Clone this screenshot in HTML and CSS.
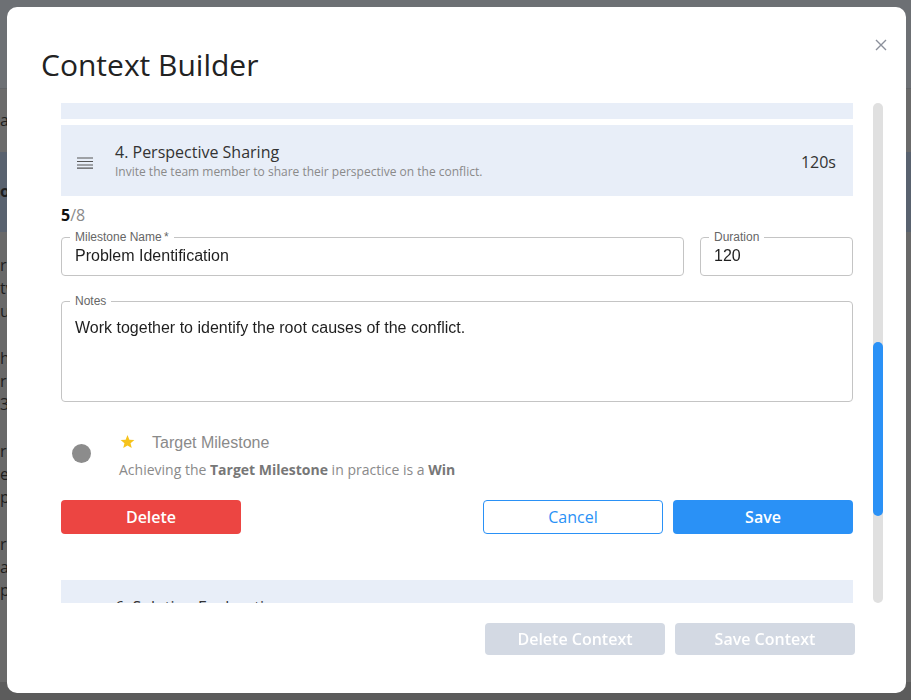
FILE: index.html
```html
<!DOCTYPE html>
<html>
<head>
  <title>Context Builder</title>
  <link rel="stylesheet" href="styles.css">
</head>
<body>
  <!-- page behind the dialog, only a sliver of it shows -->
  <div class="page">
    <div class="page-band page-head"></div>
    <div class="page-band page-plain"><p class="page-line l1">as the first step</p></div>
    <div class="page-band page-blue"><p class="page-line bold l2">or Conflict</p></div>
    <div class="page-band page-plain tall">
      <p class="page-line">r. the team</p>
      <p class="page-line">tw the lead</p>
      <p class="page-line">us the work</p>
      <p class="page-line gap">he next item</p>
      <p class="page-line">r the plan</p>
      <p class="page-line">3 minutes</p>
      <p class="page-line gap">rs and more</p>
      <p class="page-line">e of them</p>
      <p class="page-line">p the rest</p>
      <p class="page-line gap">r. the team</p>
      <p class="page-line">at the end</p>
      <p class="page-line">p the rest</p>
    </div>
  </div>

  <div class="overlay">
    <div class="modal">
      <button class="close-btn">
        <svg width="12" height="12" viewBox="0 0 12 12"><path d="M1 1L11 11M11 1L1 11" stroke="#8b909b" stroke-width="1.4" fill="none"/></svg>
      </button>
      <h2 class="modal-title">Context Builder</h2>

      <div class="modal-body">
        <div class="milestones">
          <div class="ms-card ms-tail"></div>

          <div class="ms-card">
            <svg class="drag" width="16" height="12" viewBox="0 0 16 12">
              <path d="M0 1H16M0 4.5H16M0 8H16M0 11.2H16" stroke="#555" stroke-width="1.2" fill="none"/>
            </svg>
            <div class="ms-info">
              <div class="ms-title">4. Perspective Sharing</div>
              <div class="ms-desc">Invite the team member to share their perspective on the conflict.</div>
            </div>
            <div class="ms-time">120s</div>
          </div>

          <div class="ms-count"><b>5</b><span>/8</span></div>

          <div class="field-row">
            <div class="field field-name">
              <label class="field-label">Milestone Name&thinsp;*</label>
              <div class="field-value">Problem Identification</div>
            </div>
            <div class="field field-duration">
              <label class="field-label">Duration</label>
              <div class="field-value">120</div>
            </div>
          </div>

          <div class="field field-notes">
            <label class="field-label">Notes</label>
            <div class="field-value">Work together to identify the root causes of the conflict.</div>
          </div>

          <div class="target">
            <div class="target-radio"><span class="dot"></span></div>
            <div class="target-text">
              <div class="target-head">
                <svg class="star" width="15" height="14" viewBox="0 0 24 23"><path d="M12 0l3.1 7.6 8.2.6-6.3 5.3 2 8-7-4.4-7 4.4 2-8L.7 8.2l8.2-.6z" fill="#f6c31c"/></svg>
                <span>Target Milestone</span>
              </div>
              <div class="target-desc">Achieving the <b>Target Milestone</b> in practice is a <b>Win</b></div>
            </div>
          </div>

          <div class="edit-actions">
            <button class="btn btn-delete">Delete</button>
            <div class="edit-right">
              <button class="btn btn-cancel">Cancel</button>
              <button class="btn btn-save">Save</button>
            </div>
          </div>

          <div class="ms-card ms-next">
            <span class="drag-space"></span>
            <div class="ms-info">
              <div class="ms-title">6. Solution Exploration</div>
            </div>
          </div>
        </div>

        <div class="scroll-track"><div class="scroll-thumb"></div></div>
      </div>

      <div class="modal-footer">
        <button class="btn btn-off">Delete Context</button>
        <button class="btn btn-off">Save Context</button>
      </div>
    </div>
  </div>
</body>
</html>
```

FILE: styles.css
```css
body {
  margin: 0;
  font-family: "Open Sans", "Liberation Sans", sans-serif;
  background-color: #6a6a6a;
  overflow: hidden;
}

.page {
  width: 911px;
  height: 700px;
  display: flex;
  flex-direction: column;
}

.page-band {
  overflow: hidden;
}

.page-head {
  height: 88px;
  background-color: #6d7074;
  border-bottom: 1px solid #626467;
}

.page-plain {
  height: 63px;
  background-color: #6b6b6b;
}

.page-plain.tall {
  flex: 1;
  background-color: #696969;
  border-bottom: 18px solid #5c5c5c;
}

.page-blue {
  height: 80px;
  background-color: #59626f;
}

.page-line {
  margin: 0;
  font-size: 16px;
  line-height: 23px;
  color: #1e1e1e;
}

.page-line.l1 {
  margin-top: 20px;
}

.page-line.l2 {
  margin-top: 28px;
}

.page-line.bold {
  font-weight: bold;
}

.page-plain.tall .page-line:first-child {
  margin-top: 22px;
}

.page-line.gap {
  margin-top: 24px;
}

.overlay {
  position: fixed;
  top: 0;
  left: 0;
  right: 0;
  bottom: 0;
  padding: 7px 0 0 7px;
}

.modal {
  position: relative;
  width: 899px;
  height: 686px;
  background-color: #fff;
  border-radius: 10px;
  box-sizing: border-box;
  display: flex;
  flex-direction: column;
}

.close-btn {
  position: absolute;
  top: 32px;
  right: 19px;
  padding: 0;
  border: none;
  background: none;
  width: 12px;
  height: 12px;
  display: flex;
}

.modal-title {
  margin: 37px 0 18px 34px;
  font-size: 30px;
  line-height: 41px;
  font-weight: 400;
  color: #222;
}

.modal-body {
  display: flex;
  gap: 20px;
  padding-left: 54px;
}

.milestones {
  width: 792px;
  height: 500px;
  overflow: hidden;
}

.ms-card {
  display: flex;
  align-items: center;
  background-color: #e8eef8;
  padding: 16px 17px 16px 16px;
}

.ms-tail {
  height: 16px;
  padding: 0;
  margin-bottom: 6px;
}

.drag {
  flex-shrink: 0;
  margin-right: 22px;
  margin-top: 4px;
}

.drag-space {
  width: 16px;
  margin-right: 22px;
  flex-shrink: 0;
}

.ms-info {
  flex: 1;
}

.ms-title {
  font-size: 16px;
  line-height: 22px;
  color: #333;
}

.ms-desc {
  margin-top: 1px;
  font-size: 12px;
  line-height: 16px;
  color: #8a8a8a;
}

.ms-time {
  font-size: 16px;
  color: #333;
  margin-top: 2px;
}

.ms-count {
  margin-top: 8px;
  font-size: 16px;
  line-height: 22px;
  color: #111;
}

.ms-count span {
  color: #8a8a8a;
}

.field-row {
  display: flex;
  gap: 16px;
  margin-top: 11px;
}

.field {
  position: relative;
  border: 1px solid #c4c4c4;
  border-radius: 4px;
  font-family: "Liberation Sans", Arial, sans-serif;
}

.field-name {
  flex: 1;
}

.field-duration {
  width: 151px;
}

.field-label {
  position: absolute;
  top: -8px;
  left: 8px;
  padding: 0 5px;
  background-color: #fff;
  font-size: 12px;
  line-height: 14px;
  color: #666;
}

.field-value {
  padding: 8px 13px 10px;
  font-size: 16px;
  line-height: 19px;
  color: #1f1f1f;
}

.field-notes {
  margin-top: 25px;
  height: 101px;
  box-sizing: border-box;
}

.field-notes .field-value {
  padding-top: 14px;
  line-height: 23px;
}

.target {
  display: flex;
  align-items: center;
  margin-top: 30px;
  height: 47px;
}

.target-radio {
  width: 58px;
  padding-left: 11px;
  box-sizing: border-box;
  margin-top: -4px;
}

.dot {
  display: block;
  width: 19px;
  height: 19px;
  border-radius: 50%;
  background-color: #8c8c8c;
}

.target-head {
  display: flex;
  align-items: center;
  height: 22px;
  font-family: "Liberation Sans", Arial, sans-serif;
  font-size: 16px;
  color: #8a8a8a;
  padding-left: 1px;
}

.star {
  margin-right: 17px;
  margin-top: -1px;
}

.target-desc {
  margin-top: 6px;
  font-size: 14px;
  line-height: 20px;
  color: #8a8a8a;
}

.target-desc b {
  color: #777;
}

.edit-actions {
  display: flex;
  justify-content: space-between;
  margin-top: 21px;
}

.edit-right {
  display: flex;
  gap: 10px;
}

.btn {
  width: 180px;
  height: 34px;
  border: none;
  border-radius: 4px;
  font-family: "Open Sans", "Liberation Sans", sans-serif;
  font-size: 16px;
  font-weight: 600;
  color: #fff;
  padding: 0;
}

.btn-delete {
  background-color: #ec4542;
}

.btn-cancel {
  background-color: #fff;
  border: 1px solid #2a91f6;
  color: #2a91f6;
  font-weight: 500;
}

.btn-save {
  background-color: #2a91f6;
}

.ms-next {
  margin-top: 46px;
}

.scroll-track {
  width: 10px;
  height: 500px;
  border-radius: 5px;
  background-color: #e0e0e0;
}

.scroll-thumb {
  margin-top: 239px;
  height: 174px;
  border-radius: 5px;
  background-color: #2a91f6;
}

.modal-footer {
  display: flex;
  justify-content: flex-end;
  gap: 10px;
  padding-right: 51px;
  margin-top: 20px;
}

.btn-off {
  height: 32px;
  background-color: #d3d9e3;
}
```
